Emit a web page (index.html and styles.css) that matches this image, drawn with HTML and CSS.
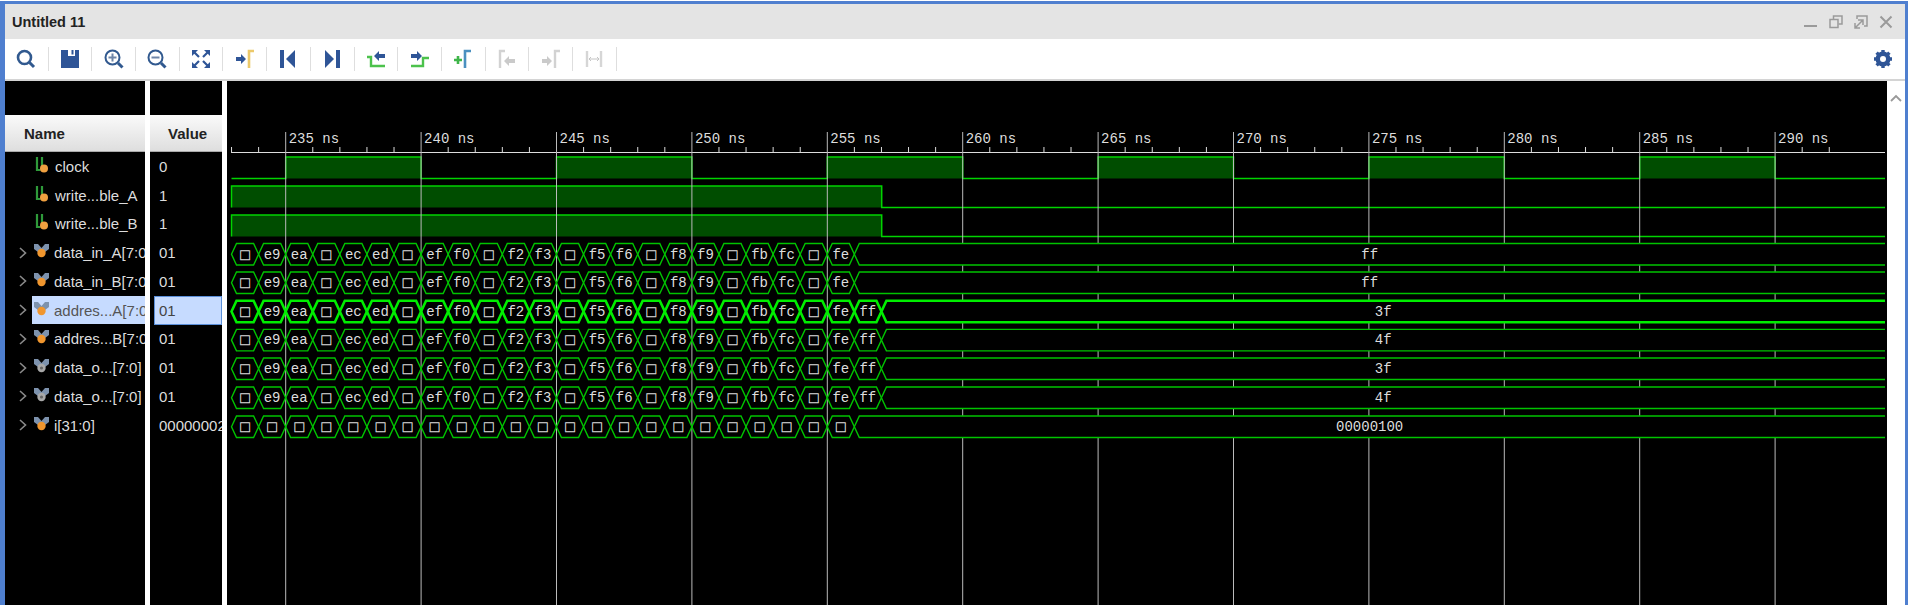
FILE: index.html
```html
<!DOCTYPE html>
<html lang="en">
<head>
  <meta charset="UTF-8">
  <title>Untitled 11</title>
  <link rel="stylesheet" href="styles.css">
</head>
<body>
  <svg class="defs">
    <symbol id="bit" viewBox="0 0 14 16">
      <path d="M1.500 0 V13 H5 M6.500 0 V10" fill="none" stroke="#2f9a3a" stroke-width="2.200"/>
      <circle cx="8.500" cy="11.500" r="4" fill="#f0a040"/>
    </symbol>
    <symbol id="bus" viewBox="0 0 15 14">
      <path d="M0 0 H4 L7.500 4 L11 0 H15 V5 L11 8 H4 L0 5 Z" fill="#7d92ad"/>
      <circle cx="7.500" cy="9" r="4.200" fill="#f0962e"/>
    </symbol>
    <symbol id="bus-out" viewBox="0 0 15 14">
      <path d="M0 0 H4 L7.500 4 L11 0 H15 V5 L11 8 H4 L0 5 Z" fill="#7d92ad"/>
      <circle cx="7.500" cy="9" r="4.200" fill="#a8a8a8"/>
      <circle cx="7.500" cy="9" r="1.600" fill="#666"/>
    </symbol>
    <symbol id="chev" viewBox="0 0 8 12">
      <path d="M1 1 L6.500 6 L1 11" fill="none" stroke="#8a8a8a" stroke-width="1.600"/>
    </symbol>
  </svg>

  <div class="window">
    <div class="titlebar">
      <span class="title">Untitled 11</span>
      <div class="winbtns">
        <svg width="14" height="14" viewBox="0 0 14 14"><path d="M0 11 H13" stroke="#9a9a9a" stroke-width="2"/></svg>
        <svg width="14" height="14" viewBox="0 0 14 14"><path d="M4.500 4 V1 H13 V9 H9.500" fill="none" stroke="#9a9a9a" stroke-width="1.500"/><rect x="1" y="4.500" width="8" height="8" fill="none" stroke="#9a9a9a" stroke-width="1.500"/></svg>
        <svg width="14" height="14" viewBox="0 0 14 14"><path d="M3 4 V1 H13 V11 H10" fill="none" stroke="#9a9a9a" stroke-width="1.500"/><path d="M1 13 L9 5 M4 5 H9 V10 M1 8 V13 H6" fill="none" stroke="#9a9a9a" stroke-width="1.500"/></svg>
        <svg width="14" height="14" viewBox="0 0 14 14"><path d="M1.500 1.500 L12.500 12.500 M12.500 1.500 L1.500 12.500" stroke="#9a9a9a" stroke-width="2"/></svg>
      </div>
    </div>

    <div class="toolbar">
      <div class="tool"><svg width="20" height="20" viewBox="0 0 20 20"><circle cx="8.500" cy="8.500" r="6.500" fill="none" stroke="#31598f" stroke-width="2.600"/><path d="M13.500 13.500 L18 18" stroke="#31598f" stroke-width="3"/></svg></div>
      <div class="tool"><svg width="20" height="20" viewBox="0 0 20 20"><path d="M1 1 H19 V19 H1 Z" fill="#2f5597"/><rect x="8" y="1" width="7" height="6" fill="#fff"/><rect x="11.500" y="1" width="2" height="4.500" fill="#2f5597"/></svg></div>
      <div class="tool"><svg width="20" height="20" viewBox="0 0 20 20"><circle cx="8.500" cy="8.500" r="7" fill="none" stroke="#31598f" stroke-width="2"/><path d="M4.500 8.500 H12.500 M8.500 4.500 V12.500" stroke="#6f86a8" stroke-width="2"/><path d="M14 14 L18.500 18.500" stroke="#31598f" stroke-width="3"/></svg></div>
      <div class="tool"><svg width="20" height="20" viewBox="0 0 20 20"><circle cx="8.500" cy="8.500" r="7" fill="none" stroke="#31598f" stroke-width="2"/><path d="M4.500 8.500 H12.500" stroke="#6f86a8" stroke-width="2"/><path d="M14 14 L18.500 18.500" stroke="#31598f" stroke-width="3"/></svg></div>
      <div class="tool"><svg width="20" height="20" viewBox="0 0 20 20"><g fill="none" stroke="#2f5597" stroke-width="2.200"><path d="M3 3 L8 8 M17 3 L12 8 M3 17 L8 12 M17 17 L12 12"/></g><g fill="#2f5597"><path d="M1 1 H7 L1 7 Z"/><path d="M19 1 H13 L19 7 Z"/><path d="M1 19 H7 L1 13 Z"/><path d="M19 19 H13 L19 13 Z"/></g></svg></div>
      <div class="tool"><svg width="20" height="20" viewBox="0 0 20 20"><path d="M14 19 V2 H19" fill="none" stroke="#ecc96a" stroke-width="2.600"/><path d="M1 8 H6 V5 L11 10 L6 15 V12 H1 Z" fill="#2f5597"/></svg></div>
      <div class="tool"><svg width="20" height="20" viewBox="0 0 20 20"><rect x="2" y="1" width="4" height="18" fill="#2f5597"/><path d="M17 1 V19 L8 10 Z" fill="#2f5597"/></svg></div>
      <div class="tool"><svg width="20" height="20" viewBox="0 0 20 20"><rect x="14" y="1" width="4" height="18" fill="#2f5597"/><path d="M3 1 V19 L12 10 Z" fill="#2f5597"/></svg></div>
      <div class="tool"><svg width="20" height="20" viewBox="0 0 20 20"><path d="M1 8 H5 V17 H19" fill="none" stroke="#4cc24c" stroke-width="2.400"/><path d="M8 7 L13 2 V5 H19 V9 H13 V12 Z" fill="#2f5597"/></svg></div>
      <div class="tool"><svg width="20" height="20" viewBox="0 0 20 20"><path d="M1 17 H13 V9 H19" fill="none" stroke="#4cc24c" stroke-width="2.400"/><path d="M12 7 L7 2 V5 H1 V9 H7 V12 Z" fill="#2f5597"/></svg></div>
      <div class="tool"><svg width="20" height="20" viewBox="0 0 20 20"><path d="M1 11 H9 M5 7 V15" stroke="#3fb54a" stroke-width="2.600"/><path d="M12 19 V2 H18" fill="none" stroke="#4a90c0" stroke-width="2.600"/></svg></div>
      <div class="tool"><svg width="20" height="20" viewBox="0 0 20 20"><path d="M3 19 V2 H8" fill="none" stroke="#d2d2d2" stroke-width="2.400"/><path d="M7 12 L12 7 V10 H18 V14 H12 V17 Z" fill="#cacaca"/></svg></div>
      <div class="tool"><svg width="20" height="20" viewBox="0 0 20 20"><path d="M14 19 V2 H19" fill="none" stroke="#d2d2d2" stroke-width="2.400"/><path d="M1 10 H6 V7 L11 12 L6 17 V14 H1 Z" fill="#cacaca"/></svg></div>
      <div class="tool"><svg width="20" height="20" viewBox="0 0 20 20"><path d="M3 2 V18 M17 2 V18" stroke="#d6d6d6" stroke-width="2.400"/><path d="M5 10 H15 M7 8 L5 10 L7 12 M13 8 L15 10 L13 12" fill="none" stroke="#c4c4c4" stroke-width="1"/></svg></div>
      <div class="spacer"></div>
      <svg class="gear" width="20" height="20" viewBox="0 0 20 20"><circle cx="10" cy="10" r="5.500" fill="none" stroke="#2f5597" stroke-width="4"/><path d="M10 1 V19 M1 10 H19 M3.600 3.600 L16.400 16.400 M16.400 3.600 L3.600 16.400" stroke="#2f5597" stroke-width="3.400"/><circle cx="10" cy="10" r="3" fill="#fff"/></svg>
    </div>

    <div class="main">
      <div class="names">
        <div class="colhead name-head">Name</div>
        <div class="row"><svg class="sigicon bit"><use href="#bit"/></svg><span>clock</span></div>
        <div class="row"><svg class="sigicon bit"><use href="#bit"/></svg><span>write...ble_A</span></div>
        <div class="row"><svg class="sigicon bit"><use href="#bit"/></svg><span>write...ble_B</span></div>
        <div class="row"><svg class="chev"><use href="#chev"/></svg><svg class="sigicon"><use href="#bus"/></svg><span>data_in_A[7:0]</span></div>
        <div class="row"><svg class="chev"><use href="#chev"/></svg><svg class="sigicon"><use href="#bus"/></svg><span>data_in_B[7:0]</span></div>
        <div class="row"><svg class="chev"><use href="#chev"/></svg><div class="selected"><svg class="sigicon"><use href="#bus"/></svg><span>addres...A[7:0]</span></div></div>
        <div class="row"><svg class="chev"><use href="#chev"/></svg><svg class="sigicon"><use href="#bus"/></svg><span>addres...B[7:0]</span></div>
        <div class="row"><svg class="chev"><use href="#chev"/></svg><svg class="sigicon"><use href="#bus-out"/></svg><span>data_o...[7:0]</span></div>
        <div class="row"><svg class="chev"><use href="#chev"/></svg><svg class="sigicon"><use href="#bus-out"/></svg><span>data_o...[7:0]</span></div>
        <div class="row"><svg class="chev"><use href="#chev"/></svg><svg class="sigicon"><use href="#bus"/></svg><span>i[31:0]</span></div>
      </div>

      <div class="values">
        <div class="colhead value-head">Value</div>
        <div class="row val">0</div>
        <div class="row val">1</div>
        <div class="row val">1</div>
        <div class="row val">01</div>
        <div class="row val">01</div>
        <div class="row val val-selected">01</div>
        <div class="row val">01</div>
        <div class="row val">01</div>
        <div class="row val">01</div>
        <div class="row val">00000002</div>
      </div>

      <div class="wave">
        <svg id="wave" width="1660" height="524" viewBox="227 81 1660 524"></svg>
      </div>

      <div class="scrollbar">
        <svg width="12" height="8" viewBox="0 0 12 8"><path d="M1 7 L6 2 L11 7" fill="none" stroke="#999" stroke-width="1.800"/></svg>
      </div>
    </div>
  </div>

  <script src="wave.js"></script>
</body>
</html>
```

FILE: styles.css
```css
body {
  margin: 0;
  background-color: #fff;
  font-family: "Liberation Sans", Arial, sans-serif;
  overflow: hidden;
}

.defs {
  display: none;
}

.window {
  display: flex;
  flex-direction: column;
  height: 601px;
  margin: 1px 7px 0 0;
  border-top: 3px solid #4f7fcf;
  border-left: 5px solid #4f7fcf;
  border-right: 3px solid #4f7fcf;
}

.titlebar {
  display: flex;
  align-items: center;
  justify-content: space-between;
  height: 35px;
  padding: 0 12px 0 7px;
  background-color: #e4e4e4;
}

.title {
  font-size: 14.500px;
  font-weight: bold;
  color: #222;
}

.winbtns {
  display: flex;
  gap: 11px;
}

.toolbar {
  display: flex;
  align-items: center;
  height: 40px;
  background-color: #fff;
  border-bottom: 2px solid #d4d4d4;
}

.tool {
  display: flex;
  align-items: center;
  justify-content: center;
  width: 43.700px;
  height: 24px;
  border-right: 1.500px solid #dedede;
  box-sizing: border-box;
}

.spacer {
  flex: 1;
}

.gear {
  margin-right: 12px;
}

.main {
  display: flex;
  flex: 1;
  min-height: 0;
}

.names,
.values {
  flex: none;
  padding-top: 34px;
  background-color: #000;
  overflow: hidden;
}

.names {
  width: 140px;
  margin-right: 5px;
}

.values {
  width: 72px;
  margin-right: 5px;
}

.colhead {
  height: 37px;
  box-sizing: border-box;
  font-size: 15px;
  font-weight: bold;
  line-height: 38px;
  color: #222;
  background: linear-gradient(#fafafa, #dedede);
  border-bottom: 1px solid #aaa;
}

.name-head {
  padding-left: 19px;
}

.value-head {
  padding-left: 18px;
}

.row {
  display: flex;
  align-items: center;
  height: 28.750px;
  padding-left: 14px;
  font-size: 15px;
  color: #ddd;
  white-space: nowrap;
}

.chev {
  flex: none;
  width: 8px;
  height: 12px;
  margin-right: 7px;
}

.sigicon {
  flex: none;
  width: 15px;
  height: 14px;
  margin: -3px 5px 0 0;
}

.sigicon.bit {
  height: 16px;
  margin-left: 16px;
  margin-right: 5px;
}

.selected {
  display: flex;
  align-items: center;
  flex: 1;
  height: 28px;
  margin-left: -2px;
  padding-left: 2px;
  background-color: #c6dbff;
  color: #555;
}

.val {
  padding-left: 9px;
}

.val-selected {
  box-sizing: border-box;
  padding-left: 4px;
  margin-left: 4px;
  color: #444;
  background-color: #c6dbff;
  border: 1px solid #5b8fd9;
}

.wave {
  flex: none;
  width: 1660px;
  background-color: #000;
}

.wave svg {
  display: block;
}

.wave text {
  font-family: "Liberation Mono", "DejaVu Sans Mono", monospace;
  font-size: 14px;
  fill: #ddd;
}

.wave text.tofu {
  font-size: 16px;
  stroke: #ddd;
  stroke-width: 0.3;
}

.scrollbar {
  flex: 1;
  padding-top: 7px;
  text-align: center;
  background-color: #fff;
}
```

FILE: wave.js
```js
const svg = document.getElementById("wave");

const NS_PX = 27.08;
const T235 = 285.7;
const LEFT = 231.5;
const RIGHT = 1885;
const GREEN = "#00d400";
const DARK_FILL = "#004d00";

function timeX(ns) {
  return T235 + (ns - 235) * NS_PX;
}

function add(tag, attrs, text) {
  const el = document.createElementNS("http://www.w3.org/2000/svg", tag);
  Object.keys(attrs).forEach(function(key) {
    el.setAttribute(key, attrs[key]);
  });
  if (text) el.textContent = text;
  svg.appendChild(el);
  return el;
}

// one bit signal, list of [from, to] spans where it is high
function drawBit(top, highs) {
  const low = top + 21.5;
  highs.forEach(function(h) {
    add("rect", { x: h[0], y: top, width: h[1] - h[0], height: 21.5, fill: DARK_FILL });
  });
  let pts = [];
  let x = LEFT;
  highs.forEach(function(h) {
    if (h[0] > x) pts.push(x + "," + low);
    pts.push(h[0] + "," + low, h[0] + "," + top, h[1] + "," + top, h[1] + "," + low);
    x = h[1];
  });
  pts.push(RIGHT + "," + low);
  add("polyline", { points: pts.join(" "), fill: "none", stroke: GREEN, "stroke-width": 1.5 });
}

function hexPoints(a, b, top, bot) {
  const mid = (top + bot) / 2;
  return [a, mid, a + 5, top, b - 5, top, b, mid, b - 5, bot, a + 5, bot].join(",");
}

// bus signal: short 1ns values, then one long value up to the right edge
function drawBus(top, labels, lastVal, thick) {
  const bot = top + 21.5;
  const mid = top + 11;
  const width = thick ? 2.6 : 1.4;
  const stroke = thick ? "#00ee00" : "#00c400";
  let a = LEFT;
  labels.forEach(function(label) {
    const b = a + NS_PX;
    add("polygon", { points: hexPoints(a, b, top, bot), fill: "none", stroke: stroke, "stroke-width": width });
    if (label === BOX) {
      add("text", { x: (a + b) / 2, y: mid + 5, "text-anchor": "middle", class: "tofu" }, label);
    } else {
      add("text", { x: (a + b) / 2, y: mid + 4, "text-anchor": "middle" }, label);
    }
    a = b;
  });
  add("polyline", {
    points: [RIGHT, top, a + 5, top, a, top + 10.750, a + 5, bot, RIGHT, bot].join(","),
    fill: "#000", stroke: stroke, "stroke-width": width
  });
  add("text", { x: (a + RIGHT) / 2, y: mid + 4, "text-anchor": "middle" }, lastVal);
}

// clock and write enables go under the grid lines
const clockHighs = [];
for (let ns = 235; ns < 290; ns += 10) {
  clockHighs.push([timeX(ns), timeX(ns + 5)]);
}
drawBit(157, clockHighs);
drawBit(186, [[LEFT, 881.7]]);
drawBit(215, [[LEFT, 881.7]]);

// ruler and grid
add("line", { x1: LEFT, y1: 152.5, x2: RIGHT, y2: 152.5, stroke: "#ddd", "stroke-width": 1.2 });
for (let ns = 233; ns <= 292; ns++) {
  const x = timeX(ns);
  if ((ns % 5) === 0) {
    add("line", { x1: x, y1: 132, x2: x, y2: 605, stroke: "#bbb", "stroke-width": 1 });
    add("text", { x: x + 3, y: 143 }, ns + " ns");
  } else {
    add("line", { x1: x, y1: 147, x2: x, y2: 153, stroke: "#ddd", "stroke-width": 1 });
  }
}

const BOX = "\u25A1";
const bytes = [BOX, "e9", "ea", BOX, "ec", "ed", BOX, "ef", "f0", BOX, "f2", "f3", BOX, "f5", "f6", BOX, "f8", "f9", BOX, "fb", "fc", BOX, "fe"];
const withFf = bytes.concat(["ff"]);
const boxes = bytes.map(function() { return BOX; });

drawBus(243.5, bytes, "ff");
drawBus(272, bytes, "ff");
drawBus(300.7, withFf, "3f", true);
drawBus(329.4, withFf, "4f");
drawBus(358, withFf, "3f");
drawBus(387, withFf, "4f");
drawBus(416, boxes, "00000100");
```
